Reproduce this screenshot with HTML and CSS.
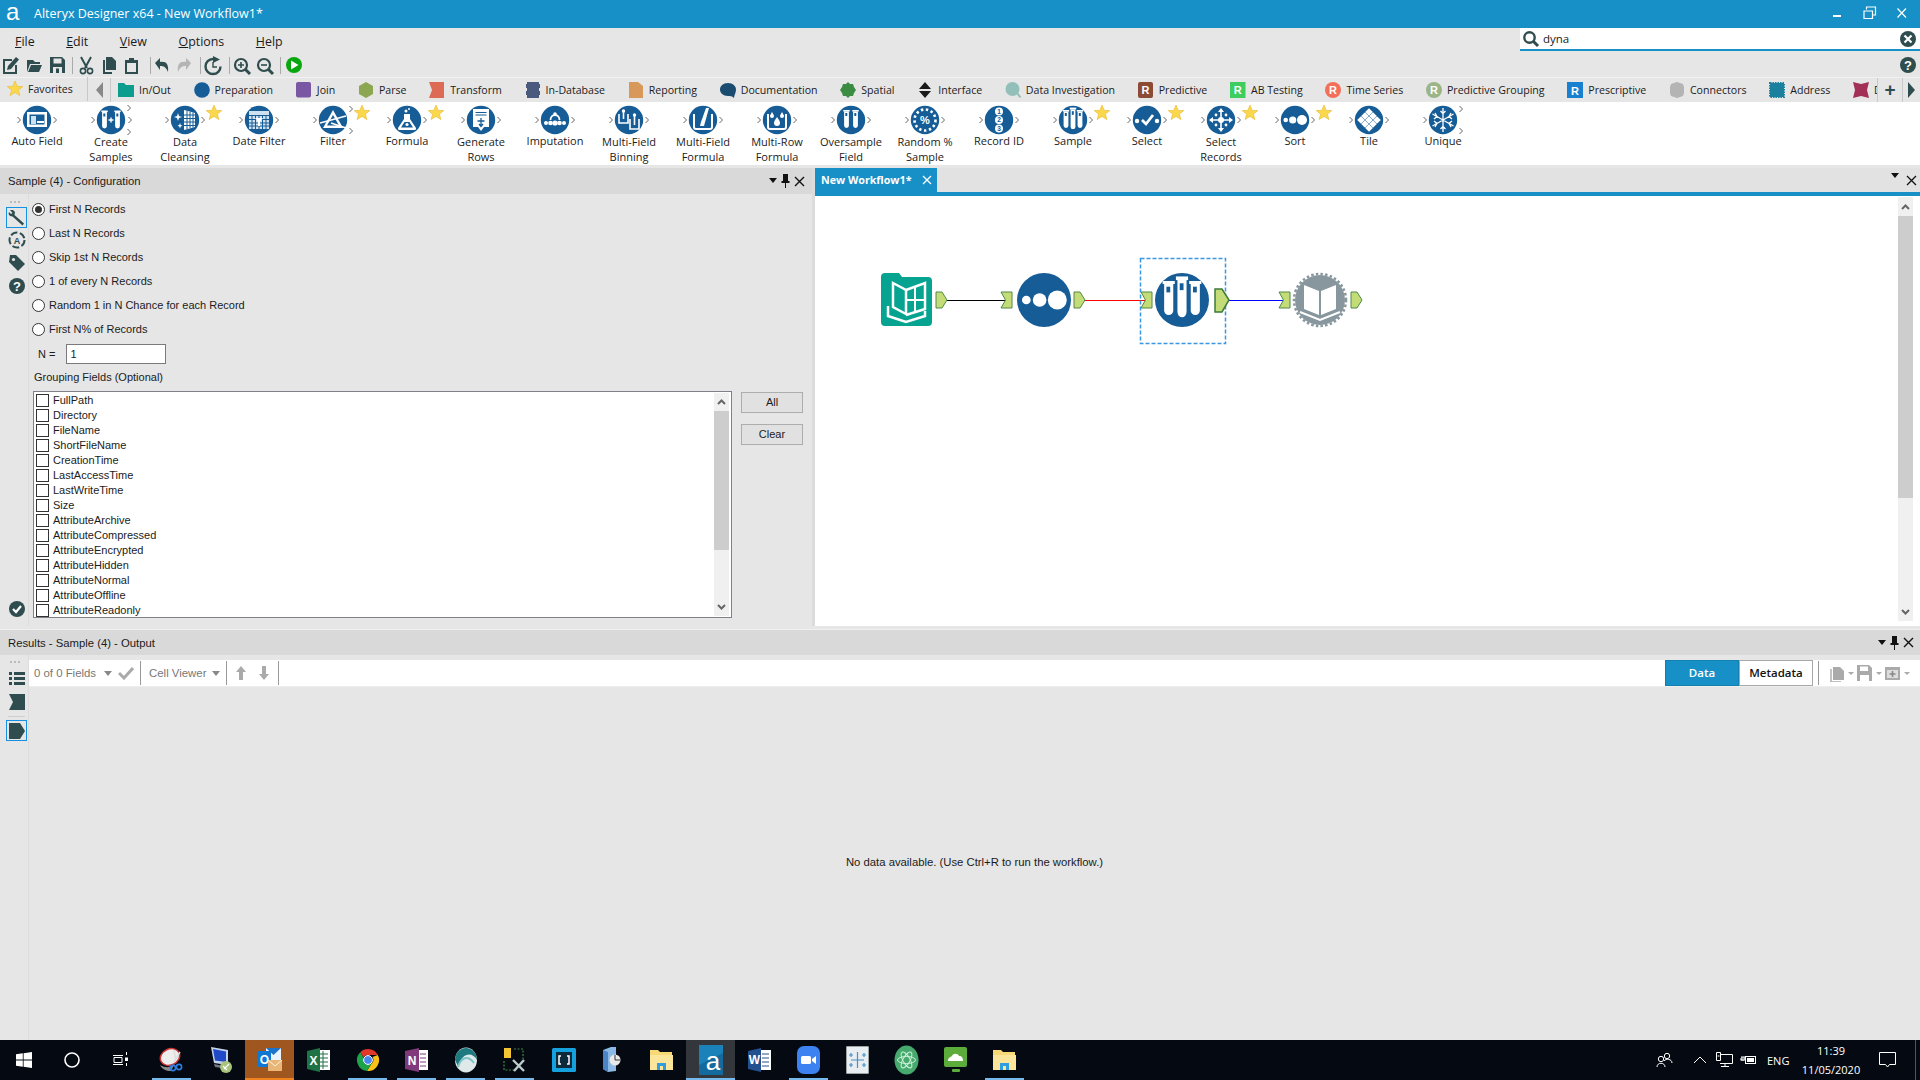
FILE: index.html
```html
<!DOCTYPE html>
<html lang="en">
<head>
<meta charset="utf-8">
<title>Alteryx Designer x64 - New Workflow1*</title>
<link rel="stylesheet" href="styles.css">
</head>
<body>
<svg class="defs" aria-hidden="true">
<defs>
<polygon id="star" points="0,-8 2.2,-2.6 7.8,-2.4 3.4,1.1 4.9,6.6 0,3.4 -4.9,6.6 -3.4,1.1 -7.8,-2.4 -2.2,-2.6" fill="#fbd84b" stroke="#e9bf3c" stroke-width=".7"/>
<path id="cv" d="M-1.5,-3 L1.5,0 L-1.5,3" fill="none" stroke="#666" stroke-width="1"/>
<g id="c11"><use href="#cv" x="19" y="18"/><use href="#cv" x="55" y="18"/></g>
<g id="c13"><use href="#cv" x="19" y="18"/><use href="#cv" x="55" y="6"/><use href="#cv" x="56" y="18"/><use href="#cv" x="55" y="30"/></g>
<g id="c12"><use href="#cv" x="19" y="18"/><use href="#cv" x="55" y="7"/><use href="#cv" x="55" y="29"/></g>
<circle id="base" r="14.2" fill="#165c96"/>

<g id="t-auto"><use href="#base"/><rect x="-10" y="-8" width="20" height="15" fill="#fff"/><rect x="-7.5" y="-5.5" width="15" height="10" fill="#165c96"/><rect x="-6" y="-4" width="5" height="8" fill="#cfe0ee"/><rect x="0" y="1" width="7" height="2" fill="#fff"/></g>
<g id="tube"><path d="M-2.4,-8 H2.4 V6 A2.4,2.4 0 0 1 -2.4,6 Z" fill="#fff"/><rect x="-3.2" y="-9.5" width="6.4" height="1.6" fill="#fff"/><rect x="-1.2" y="-6.5" width="2" height="3" fill="#165c96"/></g>
<g id="t-create"><use href="#base"/><use href="#tube" x="-6.5"/><use href="#tube" x="6.5"/><path d="M-2.5,0 H2.5 M0,-2.5 V2.5" stroke="#fff" stroke-width="1.4"/></g>
<g id="t-clean"><use href="#base"/><path d="M-1,-10 L10,-7 V7 L-1,10 Z" fill="#fff"/><path d="M2,-9 V9 M5,-8 V8 M8,-7.5 V7.5 M-1,-5 H10 M-1,-1.5 H10 M-1,2 H10 M-1,5.5 H10" stroke="#165c96" stroke-width="1"/><path d="M-7,-7 L-6,-4 L-3,-3 L-6,-2 L-7,1 L-8,-2 L-11,-3 L-8,-4 Z M-5,3 L-4.3,5 L-2.5,5.8 L-4.3,6.5 L-5,8.5 L-5.7,6.5 L-7.5,5.8 L-5.7,5 Z" fill="#fff"/></g>
<g id="t-date"><use href="#base"/><rect x="-10" y="-9" width="20" height="4" fill="#cfe0ee"/><rect x="-10" y="-4" width="20" height="13" fill="#cfe0ee"/><path d="M-7,-4 V9 M-3.5,-4 V9 M0,-4 V9 M3.5,-4 V9 M7,-4 V9 M-10,-.5 H10 M-10,3 H10 M-10,6 H10" stroke="#165c96"/><path d="M-4,-2 H4 L1,2 V6 H-1 V2 Z" fill="#fff"/></g>
<g id="t-filter"><use href="#base"/><path d="M0,-10 L-10,8 H10 Z M0,-5 L-6,5.5 H6 Z" fill="#fff" fill-rule="evenodd"/><path d="M-13,3 L13,-4 M-2,3 L13,8" stroke="#fff" stroke-width="1.5"/></g>
<g id="t-formula"><use href="#base"/><path d="M-3,-6 V-1 L-9,8 A1.5,1.5 0 0 0 -8,10 H8 A1.5,1.5 0 0 0 9,8 L3,-1 V-6 Z" fill="#fff"/><path d="M-6,7.5 L-2.5,2 H2.5 L6,7.5 Z" fill="#165c96"/><circle cx="0" cy="4.5" r="1.6" fill="#fff"/><circle cx="-1" cy="-9" r="1.5" fill="#fff"/><circle cx="2" cy="-11" r="1" fill="#fff"/></g>
<g id="t-gen"><use href="#base"/><path d="M-8,-11 H8 V7 H3 L0,11 L-3,7 H-8 Z" fill="#fff"/><path d="M-5.5,-7.5 H5.5 M-5.5,-5 H5.5" stroke="#165c96"/><path d="M0,-2 V6 M-3.5,1 H3.5 M-2,4 L0,6.5 L2,4" stroke="#165c96" stroke-width="1.3" fill="none"/></g>
<g id="t-imp"><use href="#base"/><circle cx="-9" cy="3" r="2" fill="#fff"/><circle cx="-4.5" cy="3" r="2.3" fill="#fff"/><circle cx="0" cy="3" r="2.6" fill="#fff"/><circle cx="4.5" cy="3" r="2.3" fill="#fff"/><circle cx="9" cy="3" r="2" fill="#fff"/><path d="M-4.5,0 A4.5,5 0 0 1 4.5,0" fill="none" stroke="#fff" stroke-width="1.8"/><circle cx="0" cy="-6" r="1.8" fill="#fff"/></g>
<g id="t-bin"><use href="#base"/><path d="M-10,-6 V3 H-1 V-6 M1,-1 V9 H10 V-1" fill="none" stroke="#fff" stroke-width="1.6"/><path d="M-5.5,-9 V-1 M5.5,-4 V5" stroke="#fff" stroke-width="1.6"/><circle cx="-5.5" cy="-9" r="1.7" fill="#fff"/><circle cx="5.5" cy="-5" r="1.7" fill="#fff"/></g>
<g id="t-mff"><use href="#base"/><path d="M-9,-6 V7 A2,2 0 0 0 -7,9 H7 A2,2 0 0 0 9,7 V-6" fill="none" stroke="#fff" stroke-width="2"/><path d="M6,-12 L1,6 L-3,6 L-2,2 L3,-12" fill="#fff"/></g>
<g id="t-mrf"><use href="#base"/><path d="M-9,-6 V7 A2,2 0 0 0 -7,9 H7 A2,2 0 0 0 9,7 V-6" fill="none" stroke="#fff" stroke-width="2"/><path d="M0,-3 C2,0 3,1 3,3 A3,3 0 0 1 -3,3 C-3,1 -2,0 0,-3 Z M-5,-8 C-4,-6 -3,-5 -3,-4 A2,2 0 0 1 -7,-4 C-7,-5 -6,-6 -5,-8 Z M5,-8 C6,-6 7,-5 7,-4 A2,2 0 0 1 3,-4 C3,-5 4,-6 5,-8 Z" fill="#fff"/></g>
<g id="t-over"><use href="#base"/><use href="#tube" x="-4.5" y="-.5"/><use href="#tube" x="4.5" y="-.5"/></g>
<g id="t-rand"><use href="#base"/><circle r="10.5" fill="none" stroke="#fff" stroke-width="2.6" stroke-dasharray="2.4 2.6"/><text y="4" class="svgt-b" fill="#fff" text-anchor="middle">%</text></g>
<g id="t-rec"><use href="#base"/><circle cy="-8.5" r="4" fill="#fff"/><circle cy="0" r="4" fill="#fff"/><circle cy="8.5" r="4" fill="#fff"/><text y="-6.2" class="svgt-s" fill="#165c96" text-anchor="middle">1</text><text y="2.3" class="svgt-s" fill="#165c96" text-anchor="middle">2</text><text y="10.8" class="svgt-s" fill="#165c96" text-anchor="middle">3</text></g>
<g id="t-sample"><use href="#base"/><use href="#tube" x="-7" y="-.5" /><g transform="translate(0,-1) scale(1,1.2)"><use href="#tube"/></g><use href="#tube" x="7" y="-.5"/></g>
<g id="t-select"><use href="#base"/><circle cx="-10" cy="1" r="2.2" fill="#fff"/><circle cx="10" cy="1" r="2.2" fill="#fff"/><path d="M-5,0 L-1,4 L6,-5" fill="none" stroke="#fff" stroke-width="2.8"/></g>
<g id="t-selrec"><use href="#base"/><path d="M0,-11 V11 M-11,0 H11" stroke="#fff" stroke-width="1.6"/><path d="M0,-12 L-3,-8 H3 Z M0,12 L-3,8 H3 Z M-12,0 L-8,-3 V3 Z M12,0 L8,-3 V3 Z" fill="#fff"/><circle r="3" fill="#fff"/><circle cx="-5" cy="-5" r="1.4" fill="#fff"/><circle cx="5" cy="-5" r="1.4" fill="#fff"/><circle cx="-5" cy="5" r="1.4" fill="#fff"/><circle cx="5" cy="5" r="1.4" fill="#fff"/></g>
<g id="t-sort"><use href="#base"/><circle cx="-9.3" r="2.3" fill="#fff"/><circle cx="-2.3" r="3.6" fill="#fff"/><circle cx="7" r="5" fill="#fff"/></g>
<g id="d"><rect x="-2.7" y="-2.7" width="5.4" height="5.4" transform="rotate(45)" fill="#fff"/></g>
<g id="t-tile"><use href="#base"/><use href="#d" y="-8"/><use href="#d" x="-4" y="-4"/><use href="#d" x="4" y="-4"/><use href="#d" x="-8"/><use href="#d"/><use href="#d" x="8"/><use href="#d" x="-4" y="4"/><use href="#d" x="4" y="4"/><use href="#d" y="8"/></g>
<g id="t-uni"><use href="#base"/><path d="M0,-12 V12 M-10.5,-6 L10.5,6 M-10.5,6 L10.5,-6 M-2.5,-9 L0,-6.5 L2.5,-9 M-2.5,9 L0,6.5 L2.5,9 M-9,-1 L-6,-3.5 L-8,-7 M9,1 L6,3.5 L8,7 M-9,1 L-6,3.5 L-8,7 M9,-1 L6,-3.5 L8,-7" stroke="#fff" stroke-width="1.3" fill="none"/></g>

<g id="anc-out"><path d="M-5,-8 H1 L6,0 L1,8 H-5 Z" fill="#c4dc78" stroke="#4e8a45"/></g>
<g id="anc-in"><path d="M-5.5,-8 H5.5 V8 H-5.5 L-1,0 Z" fill="#c4dc78" stroke="#4e8a45"/></g>
</defs>
</svg>

<header class="titlebar">
  <div class="title-left">
    <span class="app-logo">a</span>
    <span class="app-title">Alteryx Designer x64 - New Workflow1*</span>
  </div>
  <div class="winctl">
    <svg width="12" height="12" viewBox="0 0 12 12"><rect x="1" y="8" width="8" height="2" fill="#fff"/></svg>
    <svg width="14" height="14" viewBox="0 0 14 14"><path d="M3.5,3.5 V1 H12.5 V9 H10 M1,5 H9.5 V12.5 H1 Z" fill="none" stroke="#fff" stroke-width="1.2"/></svg>
    <svg width="12" height="12" viewBox="0 0 12 12"><path d="M1.5,1.5 L10,10.5 M10,1.5 L1.5,10.5" stroke="#fff" stroke-width="1.2"/></svg>
  </div>
</header>

<div class="menurow">
  <nav class="menu">
    <span><u>F</u>ile</span><span><u>E</u>dit</span><span><u>V</u>iew</span><span><u>O</u>ptions</span><span><u>H</u>elp</span>
  </nav>
  <div class="search">
    <svg width="18" height="18" viewBox="0 0 18 18"><circle cx="7.5" cy="7.5" r="5.2" fill="none" stroke="#2f4d4e" stroke-width="2.4"/><path d="M11.5,11.5 L16,16" stroke="#2f4d4e" stroke-width="3"/></svg>
    <span class="search-text">dyna</span>
    <svg class="search-x" width="18" height="18" viewBox="0 0 18 18"><circle cx="9" cy="9" r="8" fill="#2f4d4e"/><path d="M5.5,5.5 L12.5,12.5 M12.5,5.5 L5.5,12.5" stroke="#fff" stroke-width="2.2"/></svg>
  </div>
</div>

<div class="toolbar">
  <svg class="tb-svg" width="310" height="24" viewBox="0 0 310 24">
    <g fill="#2f4d4e">
      <path d="M3,6 H12 V8 H5 V19 H15 V12 H17 V21 H3 Z"/><path d="M8,13 L16,4 L19,6.5 L11,16 L7,17 Z"/>
      <path d="M27,7 H33 L35,9 H40 V11 H30 L27,19 Z M31,12 H42 L39,19 H28 Z"/>
      <path d="M50,4 H62 L65,7 V20 H50 Z"/><rect x="53.5" y="5.5" width="8" height="5" fill="#e6e6e6"/><rect x="53" y="14" width="9" height="6" fill="#e6e6e6"/><rect x="56" y="15.5" width="3" height="4.5"/>
      <path d="M81,4 L87,15 M91,4 L85,15" stroke="#2f4d4e" stroke-width="2" fill="none"/><circle cx="83" cy="18" r="2.6" fill="none" stroke="#2f4d4e" stroke-width="1.6"/><circle cx="90" cy="18" r="2.6" fill="none" stroke="#2f4d4e" stroke-width="1.6"/>
      <path d="M106,4 H112 L116,8 V17 H106 Z"/><path d="M103,7 V21 H112 V19 H105 V7 Z"/>
      <path d="M125,7 H129 V5 H134 V7 H138 V21 H125 Z"/><rect x="127" y="10" width="9" height="9" fill="#e6e6e6"/>
      <path d="M155,10 L160,5 V9 C166,8 169,11 168,19 C166,14 164,13 160,13 V17 Z"/>
      <path d="M191,10 L186,5 V9 C180,8 177,11 178,19 C180,14 182,13 186,13 V17 Z" fill="#b4b4b4"/>
      <path d="M213,6 A7.5,7.5 0 1 0 220.5,13.5" fill="none" stroke="#2f4d4e" stroke-width="2.4"/><path d="M213,3 L220,6.5 L213,10 Z"/><path d="M213,9 V14 H217" fill="none" stroke="#2f4d4e" stroke-width="1.4"/>
      <circle cx="241" cy="12" r="6" fill="none" stroke="#2f4d4e" stroke-width="2.2"/><path d="M245,16 L250,21" stroke="#2f4d4e" stroke-width="3"/><path d="M238,12 H244 M241,9 V15" stroke="#2f4d4e" stroke-width="1.6"/>
      <circle cx="264" cy="12" r="6" fill="none" stroke="#2f4d4e" stroke-width="2.2"/><path d="M268,16 L273,21" stroke="#2f4d4e" stroke-width="3"/><path d="M261,12 H267" stroke="#2f4d4e" stroke-width="1.6"/>
    </g>
    <path d="M72.5,4 V21 M150.5,4 V21 M200.5,4 V21 M229.5,4 V21 M280.5,4 V21" stroke="#aaa"/>
    <circle cx="294" cy="12" r="8" fill="#09a70f"/><path d="M291,7.5 L298.5,12 L291,16.5 Z" fill="#fff"/>
  </svg>
  <svg class="tb-help" width="18" height="18" viewBox="0 0 18 18"><circle cx="9" cy="9" r="8" fill="#2f4d4e"/><text x="9" y="13.5" class="svgt-q" fill="#fff" text-anchor="middle">?</text></svg>
</div>

<div class="cats">
  <div class="fav">
    <svg width="16" height="16" viewBox="-8 -8 16 16"><use href="#star"/></svg>
    <span>Favorites</span>
  </div>
  <div class="cat-prev"><svg width="9" height="16" viewBox="0 0 9 16"><path d="M8,0 V16 L1,8 Z" fill="#888"/></svg></div>
  <div class="cat-list">
    <div class="cat"><svg viewBox="0 0 16 16"><path d="M0,1 H6 L8,3 H16 V15 H0 Z" fill="#0d9d8e"/></svg>In/Out</div>
    <div class="cat"><svg viewBox="0 0 16 16"><circle cx="8" cy="8" r="7.8" fill="#165c96"/></svg>Preparation</div>
    <div class="cat"><svg viewBox="0 0 16 16"><rect x="0" y="0" width="15" height="15.5" rx="2" fill="#7a57a3"/></svg>Join</div>
    <div class="cat"><svg viewBox="0 0 16 16"><path d="M8,0 L15,4 V12 L8,16 L1,12 V4 Z" fill="#8ca752"/></svg>Parse</div>
    <div class="cat"><svg viewBox="0 0 16 16"><path d="M0,0 H15 V16 H0 L3,8 Z" fill="#dd6a54"/></svg>Transform</div>
    <div class="cat"><svg viewBox="0 0 16 16"><path d="M2,0 H14 V2 H15 V6 H14 V9 H15 V13 H14 V16 H2 V13 H1 V9 H2 V6 H1 V2 H2 Z" fill="#4a5a7e"/></svg>In-Database</div>
    <div class="cat"><svg viewBox="0 0 16 16"><path d="M1,0 H10 L15,4 V16 H1 Z" fill="#d8985a"/></svg>Reporting</div>
    <div class="cat"><svg viewBox="0 0 16 16"><path d="M8,1 C13,1 16,4 16,7.5 C16,11 14,13 14,16 C12,14 10,14 8,14 C3,14 0,11 0,7.5 C0,4 3,1 8,1 Z" fill="#1a4c70"/></svg>Documentation</div>
    <div class="cat"><svg viewBox="0 0 16 16"><path d="M8,0 L10,2 L13,2 L14,5 L16,8 L14,11 L13,14 L10,14 L8,16 L6,14 L3,14 L2,11 L0,8 L2,5 L3,2 L6,2 Z" fill="#3a8d43"/></svg>Spatial</div>
    <div class="cat"><svg viewBox="0 0 16 16"><path d="M8,0 L14,7 H2 Z M2,9 H14 L8,16 Z" fill="#1a1a1a"/></svg>Interface</div>
    <div class="cat"><svg viewBox="0 0 16 16"><circle cx="7.5" cy="7" r="7" fill="#92bfb9"/><path d="M12,11 L15.5,15.5" stroke="#92bfb9" stroke-width="2"/></svg>Data Investigation</div>
    <div class="cat"><svg viewBox="0 0 16 16"><rect width="15" height="16" rx="2" fill="#8b4b35"/><text x="7.5" y="12" class="svgt-r" fill="#fff" text-anchor="middle">R</text></svg>Predictive</div>
    <div class="cat"><svg viewBox="0 0 16 16"><rect width="15.5" height="16" fill="#3ece5f"/><text x="7.7" y="12" class="svgt-r" fill="#fff" text-anchor="middle">R</text></svg>AB Testing</div>
    <div class="cat"><svg viewBox="0 0 16 16"><circle cx="8" cy="8" r="8" fill="#f2705a"/><text x="8" y="12" class="svgt-r" fill="#fff" text-anchor="middle">R</text></svg>Time Series</div>
    <div class="cat"><svg viewBox="0 0 16 16"><circle cx="8" cy="8" r="8" fill="#9cb587"/><text x="8" y="12" class="svgt-r" fill="#fff" text-anchor="middle">R</text></svg>Predictive Grouping</div>
    <div class="cat"><svg viewBox="0 0 16 16"><rect width="16" height="16" fill="#1780d1"/><text x="8" y="12.5" class="svgt-r" fill="#fff" text-anchor="middle">R</text></svg>Prescriptive</div>
    <div class="cat"><svg viewBox="0 0 16 16"><path d="M8,0 L11,1 L14,2 L15,5 L15,11 L14,14 L11,15 L8,16 L5,15 L2,14 L1,11 L1,5 L2,2 L5,1 Z" fill="#b4b4b4"/></svg>Connectors</div>
    <div class="cat"><svg viewBox="0 0 16 16"><rect x="1" y="1" width="14" height="14" fill="#1b7f9e" stroke="#1b7f9e" stroke-width="2" stroke-dasharray="1.5 1"/></svg>Address</div>
    <div class="cat"><svg viewBox="0 0 16 16"><path d="M0,0 L8,2 L16,0 L14,8 L16,16 L8,14 L0,16 L2,8 Z" fill="#a22f55"/></svg>D</div>
  </div>
  <div class="cat-add">+</div>
  <div class="cat-next"><svg width="9" height="16" viewBox="0 0 9 16"><path d="M1,0 V16 L8,8 Z" fill="#2f4d4e"/></svg></div>
</div>

<div class="tools">
  <div class="tool"><svg viewBox="0 0 74 34"><use href="#c11"/><use href="#t-auto" x="37" y="18"/></svg><span>Auto Field</span></div>
  <div class="tool two"><svg viewBox="0 0 74 34"><use href="#c13"/><use href="#t-create" x="37" y="18"/></svg><span>Create<br>Samples</span></div>
  <div class="tool two"><svg viewBox="0 0 74 34"><use href="#c11"/><use href="#t-clean" x="37" y="18"/><use href="#star" x="66" y="11"/></svg><span>Data<br>Cleansing</span></div>
  <div class="tool"><svg viewBox="0 0 74 34"><use href="#c11"/><use href="#t-date" x="37" y="18"/></svg><span>Date Filter</span></div>
  <div class="tool"><svg viewBox="0 0 74 34"><use href="#c12"/><use href="#t-filter" x="37" y="18"/><use href="#star" x="66" y="11"/></svg><span>Filter</span></div>
  <div class="tool"><svg viewBox="0 0 74 34"><use href="#c11"/><use href="#t-formula" x="37" y="18"/><use href="#star" x="66" y="11"/></svg><span>Formula</span></div>
  <div class="tool two"><svg viewBox="0 0 74 34"><use href="#c11"/><use href="#t-gen" x="37" y="18"/></svg><span>Generate<br>Rows</span></div>
  <div class="tool"><svg viewBox="0 0 74 34"><use href="#c11"/><use href="#t-imp" x="37" y="18"/></svg><span>Imputation</span></div>
  <div class="tool two"><svg viewBox="0 0 74 34"><use href="#c11"/><use href="#t-bin" x="37" y="18"/></svg><span>Multi-Field<br>Binning</span></div>
  <div class="tool two"><svg viewBox="0 0 74 34"><use href="#c11"/><use href="#t-mff" x="37" y="18"/></svg><span>Multi-Field<br>Formula</span></div>
  <div class="tool two"><svg viewBox="0 0 74 34"><use href="#c11"/><use href="#t-mrf" x="37" y="18"/></svg><span>Multi-Row<br>Formula</span></div>
  <div class="tool two"><svg viewBox="0 0 74 34"><use href="#c11"/><use href="#t-over" x="37" y="18"/></svg><span>Oversample<br>Field</span></div>
  <div class="tool two"><svg viewBox="0 0 74 34"><use href="#c11"/><use href="#t-rand" x="37" y="18"/></svg><span>Random %<br>Sample</span></div>
  <div class="tool"><svg viewBox="0 0 74 34"><use href="#c11"/><use href="#t-rec" x="37" y="18"/></svg><span>Record ID</span></div>
  <div class="tool"><svg viewBox="0 0 74 34"><use href="#c11"/><use href="#t-sample" x="37" y="18"/><use href="#star" x="66" y="11"/></svg><span>Sample</span></div>
  <div class="tool"><svg viewBox="0 0 74 34"><use href="#c11"/><use href="#t-select" x="37" y="18"/><use href="#star" x="66" y="11"/></svg><span>Select</span></div>
  <div class="tool two"><svg viewBox="0 0 74 34"><use href="#c11"/><use href="#t-selrec" x="37" y="18"/><use href="#star" x="66" y="11"/></svg><span>Select<br>Records</span></div>
  <div class="tool"><svg viewBox="0 0 74 34"><use href="#c11"/><use href="#t-sort" x="37" y="18"/><use href="#star" x="66" y="11"/></svg><span>Sort</span></div>
  <div class="tool"><svg viewBox="0 0 74 34"><use href="#c11"/><use href="#t-tile" x="37" y="18"/></svg><span>Tile</span></div>
  <div class="tool"><svg viewBox="0 0 74 34"><use href="#c12"/><use href="#t-uni" x="37" y="18"/></svg><span>Unique</span></div>
</div>

<main class="workspace">
  <section class="config">
    <div class="panelhead">
      <span>Sample (4) - Configuration</span>
      <div class="panelctl">
        <svg width="8" height="6" viewBox="0 0 8 6"><path d="M0,0 H8 L4,5 Z" fill="#111"/></svg>
        <svg width="9" height="14" viewBox="0 0 9 14"><path d="M2,0 H7 V7 H8.5 V9 H5 V14 H4 V9 H.5 V7 H2 Z" fill="#111"/></svg>
        <svg width="11" height="11" viewBox="0 0 11 11"><path d="M1,1 L10,10 M10,1 L1,10" stroke="#111" stroke-width="1.4"/></svg>
      </div>
    </div>
    <div class="configbody">
      <aside class="rail">
        <div class="rail-dots"></div>
        <div class="rail-btn on"><svg width="18" height="18" viewBox="0 0 18 18"><path d="M2,1 L5,1 L7,3 L6.5,6 L16,14.5 L14.5,16.5 L4.5,7.5 L2,7 L0.5,5 L1,3 L3,5 L4.5,4 Z" fill="#2f4d4e"/></svg></div>
        <div class="rail-btn"><svg width="18" height="18" viewBox="0 0 18 18"><circle cx="9" cy="9" r="7.5" fill="none" stroke="#2f4d4e" stroke-width="2" stroke-dasharray="7 2.5"/><text x="9" y="12.5" class="svgt-s2" fill="#2f4d4e" text-anchor="middle">A</text></svg></div>
        <div class="rail-btn"><svg width="18" height="18" viewBox="0 0 18 18"><path d="M2,1 H8 L17,10 L10,17 L1,8 Z" fill="#2f4d4e"/><circle cx="5.5" cy="5.5" r="1.6" fill="#e6e6e6"/></svg></div>
        <div class="rail-btn"><svg width="18" height="18" viewBox="0 0 18 18"><circle cx="9" cy="9" r="8" fill="#2f4d4e"/><text x="9" y="13.5" class="svgt-q" fill="#fff" text-anchor="middle">?</text></svg></div>
        <div class="rail-spacer"></div>
        <div class="rail-check"><svg width="18" height="18" viewBox="0 0 18 18"><circle cx="9" cy="9" r="8" fill="#2f4d4e"/><path d="M5,9 L8,12 L13,6" fill="none" stroke="#fff" stroke-width="2.2"/></svg></div>
      </aside>
      <div class="form">
        <label class="radio"><i class="dot sel"></i>First N Records</label>
        <label class="radio"><i class="dot"></i>Last N Records</label>
        <label class="radio"><i class="dot"></i>Skip 1st N Records</label>
        <label class="radio"><i class="dot"></i>1 of every N Records</label>
        <label class="radio"><i class="dot"></i>Random 1 in N Chance for each Record</label>
        <label class="radio"><i class="dot"></i>First N% of Records</label>
        <div class="nrow"><span>N =</span><div class="ninput">1</div></div>
        <div class="grp">Grouping Fields (Optional)</div>
        <div class="listrow">
          <div class="listbox">
            <div class="rows">
              <div class="row"><i></i>FullPath</div>
              <div class="row"><i></i>Directory</div>
              <div class="row"><i></i>FileName</div>
              <div class="row"><i></i>ShortFileName</div>
              <div class="row"><i></i>CreationTime</div>
              <div class="row"><i></i>LastAccessTime</div>
              <div class="row"><i></i>LastWriteTime</div>
              <div class="row"><i></i>Size</div>
              <div class="row"><i></i>AttributeArchive</div>
              <div class="row"><i></i>AttributeCompressed</div>
              <div class="row"><i></i>AttributeEncrypted</div>
              <div class="row"><i></i>AttributeHidden</div>
              <div class="row"><i></i>AttributeNormal</div>
              <div class="row"><i></i>AttributeOffline</div>
              <div class="row"><i></i>AttributeReadonly</div>
            </div>
            <div class="lscroll">
              <div class="arrow"><svg width="9" height="6" viewBox="0 0 9 6"><path d="M1,5 L4.5,1.5 L8,5" fill="none" stroke="#666" stroke-width="2"/></svg></div>
              <div class="thumb"></div>
              <div class="arrow down"><svg width="9" height="6" viewBox="0 0 9 6"><path d="M1,1 L4.5,4.5 L8,1" fill="none" stroke="#666" stroke-width="2"/></svg></div>
            </div>
          </div>
          <div class="listbtns"><div class="btn">All</div><div class="btn">Clear</div></div>
        </div>
      </div>
    </div>
  </section>
  <section class="canvaspane">
    <div class="tabstrip">
      <div class="tab"><span>New Workflow1*</span><svg width="10" height="10" viewBox="0 0 10 10"><path d="M1,1 L9,9 M9,1 L1,9" stroke="#fff" stroke-width="1.3"/></svg></div>
      <div class="tabctl">
        <svg width="8" height="6" viewBox="0 0 8 6"><path d="M0,0 H8 L4,5 Z" fill="#111"/></svg>
        <svg width="11" height="11" viewBox="0 0 11 11"><path d="M1,1 L10,10 M10,1 L1,10" stroke="#111" stroke-width="1.3"/></svg>
      </div>
    </div>
    <div class="canvas">
      <svg class="flow" width="620" height="430" viewBox="815 196 620 430">
        <path d="M947,300.5 H1007" stroke="#000" stroke-width="1"/>
        <path d="M1084,300.5 H1145" stroke="#f00" stroke-width="1"/>
        <path d="M1229,300.5 H1283" stroke="#00f" stroke-width="1"/>
        <g>
          <path d="M881,277 A4,4 0 0 1 885,273 H899 L902,277 H928 A4,4 0 0 1 932,281 V322 A4,4 0 0 1 928,326 H885 A4,4 0 0 1 881,322 Z" fill="#06a391"/>
          <path d="M893,283 L906,290 V314 L893,307 Z" fill="none" stroke="#fff" stroke-width="2.5"/>
          <path d="M906,290 L925,283 V309 L906,315" fill="none" stroke="#fff" stroke-width="2.5"/>
          <path d="M888,306 V316 L906,322 L925,316 V311" fill="none" stroke="#fff" stroke-width="2.5"/>
          <path d="M915,287 V311 M907,300 H924" stroke="#fff" stroke-width="2"/>
        </g>
        <use href="#anc-out" x="941" y="300"/>
        <use href="#anc-in" x="1006.5" y="300"/>
        <g transform="translate(1044,300) scale(1.9)"><use href="#t-sort"/></g>
        <use href="#anc-out" x="1079" y="300"/>
        <use href="#anc-in" x="1146.5" y="300"/>
        <rect x="1140.5" y="258.5" width="85" height="85" fill="none" stroke="#3b97e0" stroke-width="1.5" stroke-dasharray="4 2"/>
        <g transform="translate(1182,300) scale(1.9)"><use href="#t-sample"/></g>
        <path d="M1215,289 H1222 L1229,300 L1222,312 H1215 Z" fill="#c4dc78" stroke="#3c7a3a" stroke-width="1.5"/>
        <use href="#anc-in" x="1284.5" y="300"/>
        <g>
          <circle cx="1320" cy="300" r="25" fill="#88979d"/>
          <circle cx="1320" cy="300" r="26" fill="none" stroke="#88979d" stroke-width="2.5" stroke-dasharray="2.5 2.2"/>
          <path d="M1304,285 L1319,291 V315 L1304,309 Z M1336,285 L1321,291 V315 L1336,309 Z" fill="#fff"/>
          <path d="M1300,312 L1320,320 L1340,312" fill="none" stroke="#fff" stroke-width="2"/>
        </g>
        <use href="#anc-out" x="1356" y="300"/>
      </svg>
      <div class="cscroll">
        <div class="arrow"><svg width="9" height="6" viewBox="0 0 9 6"><path d="M1,5 L4.5,1.5 L8,5" fill="none" stroke="#666" stroke-width="2"/></svg></div>
        <div class="thumb"></div>
        <div class="arrow down"><svg width="9" height="6" viewBox="0 0 9 6"><path d="M1,1 L4.5,4.5 L8,1" fill="none" stroke="#666" stroke-width="2"/></svg></div>
      </div>
    </div>
  </section>
</main>

<section class="results">
  <div class="panelhead rhead">
    <span>Results - Sample (4) - Output</span>
    <div class="panelctl">
      <svg width="8" height="6" viewBox="0 0 8 6"><path d="M0,0 H8 L4,5 Z" fill="#111"/></svg>
      <svg width="9" height="14" viewBox="0 0 9 14"><path d="M2,0 H7 V7 H8.5 V9 H5 V14 H4 V9 H.5 V7 H2 Z" fill="#111"/></svg>
      <svg width="11" height="11" viewBox="0 0 11 11"><path d="M1,1 L10,10 M10,1 L1,10" stroke="#111" stroke-width="1.4"/></svg>
    </div>
  </div>
  <div class="resbody">
    <aside class="rail rrail">
      <div class="rail-dots"></div>
      <div class="rail-btn"><svg width="18" height="18" viewBox="0 0 18 18"><path d="M1,3 H4 V6 H1 Z M6,3 H17 V6 H6 Z M1,8 H4 V11 H1 Z M6,8 H17 V11 H6 Z M1,13 H4 V16 H1 Z M6,13 H17 V16 H6 Z" fill="#2f4d4e"/></svg></div>
      <div class="rail-btn tall"><svg width="18" height="16" viewBox="0 0 18 16"><path d="M1,0 H17 V16 H1 L5,8 Z" fill="#2f4d4e"/></svg></div>
      <div class="rail-sep"></div>
      <div class="rail-btn on"><svg width="18" height="16" viewBox="0 0 18 16"><path d="M1,0 H12 L17,8 L12,16 H1 Z" fill="#2f4d4e"/></svg></div>
    </aside>
    <div class="resmain">
      <div class="restools">
        <span class="rt-text rt-fields">0 of 0 Fields</span>
        <svg width="8" height="5" viewBox="0 0 8 5"><path d="M0,0 H8 L4,5 Z" fill="#888"/></svg>
        <svg class="rt-check" width="16" height="14" viewBox="0 0 16 14"><path d="M1,7 L6,12 L15,2" fill="none" stroke="#aaa" stroke-width="3"/></svg>
        <i class="rt-sep"></i>
        <span class="rt-text">Cell Viewer</span>
        <svg width="8" height="5" viewBox="0 0 8 5"><path d="M0,0 H8 L4,5 Z" fill="#888"/></svg>
        <i class="rt-sep"></i>
        <svg class="rt-up" width="10" height="14" viewBox="0 0 10 14"><path d="M5,0 L10,6 H7 V14 H3 V6 H0 Z" fill="#aaa"/></svg>
        <svg class="rt-down" width="10" height="14" viewBox="0 0 10 14"><path d="M5,14 L10,8 H7 V0 H3 V8 H0 Z" fill="#aaa"/></svg>
        <i class="rt-sep"></i>
        <div class="rt-spacer"></div>
        <div class="seg on">Data</div>
        <div class="seg">Metadata</div>
        <i class="rt-sep rt-sep2"></i>
        <svg width="28" height="18" viewBox="0 0 28 18"><path d="M5,3 H12 L16,7 V16 H5 Z" fill="#aaa"/><path d="M3,5 V18 H13" fill="none" stroke="#aaa" stroke-width="1.4"/><path d="M20,8 H26 L23,11 Z" fill="#aaa"/></svg>
        <svg width="28" height="18" viewBox="0 0 28 18"><path d="M1,1 H13 L16,4 V17 H1 Z" fill="#aaa"/><rect x="4" y="2.5" width="8" height="4.5" fill="#fff"/><rect x="4" y="11" width="9" height="6" fill="#fff"/><path d="M20,8 H26 L23,11 Z" fill="#aaa"/></svg>
        <svg class="rt-last" width="28" height="18" viewBox="0 0 28 18"><rect x="1" y="3" width="15" height="13" fill="#aaa"/><rect x="3" y="6" width="11" height="8" fill="#ddd"/><path d="M8.5,7 V13 M5.5,10 H11.5" stroke="#888" stroke-width="1.6"/><path d="M20,8 H26 L23,11 Z" fill="#aaa"/></svg>
      </div>
      <div class="resarea">No data available. (Use Ctrl+R to run the workflow.)</div>
    </div>
  </div>
</section>

<footer class="taskbar">
  <div class="tk tk-sys"><svg width="16" height="16" viewBox="0 0 16 16"><path d="M0,2.3 L6.8,1.3 V7.5 H0 Z M7.6,1.2 L16,0 V7.5 H7.6 Z M0,8.4 H6.8 V14.7 L0,13.7 Z M7.6,8.4 H16 V16 L7.6,14.8 Z" fill="#fff"/></svg></div>
  <div class="tk tk-sys"><svg width="16" height="16" viewBox="0 0 16 16"><circle cx="8" cy="8" r="7" fill="none" stroke="#fff" stroke-width="1.6"/></svg></div>
  <div class="tk tk-sys tk-view"><svg width="17" height="16" viewBox="0 0 17 16"><path d="M1,3.5 H11 M1,12.5 H11 M2,5.5 H10 V10.5 H2 Z" fill="none" stroke="#fff" stroke-width="1"/><rect x="13" y="5.5" width="3" height="3.5" fill="#fff"/><path d="M14.5,0 V3 M14.5,11 V14" stroke="#fff"/></svg></div>
  <div class="tk run"><svg width="26" height="26" viewBox="0 0 26 26"><ellipse cx="11" cy="10" rx="10" ry="8" fill="#eee" stroke="#c33" stroke-width="1.5" transform="rotate(-25 11 10)"/><path d="M1,18 C8,22 14,20 16,16 L12,24 C7,24 3,22 1,18 Z" fill="#8a8a8a"/><path d="M15,3 L17,14 M21,5 L15,15" stroke="#ddd" stroke-width="1.5"/><circle cx="14" cy="21" r="2.6" fill="none" stroke="#2a7de1" stroke-width="1.6"/><circle cx="20" cy="20" r="2.6" fill="none" stroke="#2a7de1" stroke-width="1.6"/></svg></div>
  <div class="tk"><svg width="26" height="28" viewBox="0 0 26 28"><path d="M3,1 L20,4 V19 L6,17 Z" fill="#c3d3ea"/><path d="M5,3 L18,5.5 V16 L7,14.5 Z" fill="#1f49c6"/><path d="M6,18 L20,21 V23 L7,21 Z" fill="#778"/><circle cx="18" cy="21" r="6" fill="#a8c37a"/><path d="M15,20 L19,24 M16,23 L21,18" stroke="#fff" stroke-width="1.2"/></svg></div>
  <div class="tk active-o"><svg width="24" height="26" viewBox="0 0 24 26"><rect x="8" y="1" width="15" height="14" fill="#eaf3fb"/><path d="M8,1 H23 L15.5,8 Z" fill="#1d73c9"/><rect x="0" y="4" width="13" height="16" fill="#0f78d4"/><text x="6.5" y="16.5" class="svgt-tb" fill="#fff" text-anchor="middle">O</text><rect x="10" y="13" width="14" height="11" fill="#e9b678"/><path d="M10,13 L17,19 L24,13" fill="none" stroke="#fff3d9" stroke-width="1"/></svg></div>
  <div class="tk"><svg width="24" height="24" viewBox="0 0 24 24"><rect x="9" y="2" width="14" height="20" fill="#fff"/><path d="M12,6 H21 M12,10 H21 M12,14 H21 M12,18 H21 M16,3 V21" stroke="#1f7246"/><path d="M0,3 L13,0 V24 L0,21 Z" fill="#1f7246"/><text x="6.5" y="16.5" class="svgt-tb" fill="#fff" text-anchor="middle">X</text></svg></div>
  <div class="tk run"><svg width="24" height="24" viewBox="0 0 24 24"><path d="M12,1 A11,11 0 0 1 21.8,7 H12 A5,5 0 0 0 7.5,9.5 L4.3,4.2 A11,11 0 0 1 12,1 Z" fill="#e3372a"/><path d="M21.8,7 A11,11 0 0 1 11,23 L15.5,15.5 A5,5 0 0 0 16.5,9 Z" fill="#fbc116"/><path d="M4.3,4.2 L9.5,13.5 A5,5 0 0 0 15.5,15.5 L11,23 A11,11 0 0 1 4.3,4.2 Z" fill="#1fa34a"/><circle cx="12" cy="12" r="4.4" fill="#4a87f0" stroke="#fff" stroke-width="1"/></svg></div>
  <div class="tk run"><svg width="24" height="24" viewBox="0 0 24 24"><rect x="9" y="2" width="14" height="20" fill="#fff"/><path d="M15,6 H21 M15,10 H21 M15,14 H21 M15,18 H21" stroke="#80397b"/><path d="M0,3 L14,0 V24 L0,21 Z" fill="#80397b"/><text x="7" y="16.5" class="svgt-tb" fill="#fff" text-anchor="middle">N</text></svg></div>
  <div class="tk run"><svg width="24" height="26" viewBox="0 0 24 26"><ellipse cx="12" cy="13" rx="11" ry="12.5" fill="#dfe9ea"/><path d="M1,13 A11,12 0 0 1 23,13 C18,4 8,6 4,19 Z" fill="#1f7a7f"/><path d="M4,20 C7,10 14,8 20,16" fill="none" stroke="#7dc4c7" stroke-width="2"/></svg></div>
  <div class="tk run"><svg width="26" height="26" viewBox="0 0 26 26"><rect x="2" y="1" width="7" height="10" fill="#f3c433"/><path d="M12,2 H21 V12 M2,14 V23 H12" fill="none" stroke="#3d8c40" stroke-width="1.2" stroke-dasharray="2 1.5"/><path d="M11,13 L22,24 M22,13 L12,24" stroke="#bcc" stroke-width="2.4"/></svg></div>
  <div class="tk"><svg width="24" height="24" viewBox="0 0 24 24"><rect width="24" height="24" rx="1.5" fill="#14a1dd"/><rect x="4" y="4" width="16" height="16" fill="#0d2a3a"/><path d="M9,8 H7 V16 H9 M15,8 H17 V16 H15" fill="none" stroke="#fff" stroke-width="1.5"/></svg></div>
  <div class="tk"><svg width="22" height="26" viewBox="0 0 22 26"><path d="M1,3 L9,0 H14 V24 L6,25 L1,22 Z" fill="#8ab9e6"/><path d="M1,3 L6,5 V25 L1,22 Z" fill="#4b84c4"/><circle cx="13" cy="13" r="5.5" fill="#e9e9e9"/><path d="M13,8 V13 H18" stroke="#333" fill="none"/></svg></div>
  <div class="tk"><svg width="23" height="22" viewBox="0 0 23 22"><path d="M0,1 H8 L10,3 H22 V21 H0 Z" fill="#f6d877"/><rect y="6" width="23" height="15" fill="#fbe59a"/><path d="M7,21 V14 H16 V21 H13 V17 H10 V21 Z" fill="#2d9fe0"/></svg></div>
  <div class="tk active-a"><svg width="24" height="30" viewBox="0 0 24 30"><rect width="24" height="30" fill="#1a82b9"/><path d="M0,20 L24,8 V30 H0 Z" fill="#146a9c"/><text x="14" y="25" class="svgt-a" fill="#fff" text-anchor="middle">a</text></svg></div>
  <div class="tk"><svg width="24" height="24" viewBox="0 0 24 24"><rect x="9" y="2" width="14" height="20" fill="#fff"/><path d="M14,6 H21 M14,10 H21 M14,14 H21 M14,18 H21" stroke="#23508f"/><path d="M0,3 L13,0 V24 L0,21 Z" fill="#23508f"/><text x="6.5" y="16" class="svgt-tb" fill="#fff" text-anchor="middle">W</text></svg></div>
  <div class="tk run"><svg width="23" height="28" viewBox="0 0 23 28"><rect width="23" height="28" rx="7" fill="#3c82f0"/><rect x="4" y="10" width="10" height="8" rx="1.5" fill="#fff"/><path d="M15,13 L19,10 V18 L15,15 Z" fill="#fff"/></svg></div>
  <div class="tk"><svg width="23" height="28" viewBox="0 0 23 28"><rect width="23" height="28" rx="1" fill="#e8edf1" stroke="#555"/><path d="M11.5,6 V22 M5,14 H18 M5,7 V11 M3,9 H7 M18,7 V11 M16,9 H20 M5,17 V21 M3,19 H7 M18,17 V21 M16,19 H20" stroke="#4a90c0" stroke-width="1.2"/></svg></div>
  <div class="tk"><svg width="25" height="30" viewBox="0 0 25 30"><ellipse cx="12.5" cy="15" rx="12" ry="14.5" fill="#46a96d"/><ellipse cx="12.5" cy="15" rx="9" ry="3.5" fill="none" stroke="#d0f0da" transform="rotate(60 12.5 15)"/><ellipse cx="12.5" cy="15" rx="9" ry="3.5" fill="none" stroke="#d0f0da" transform="rotate(-60 12.5 15)"/><ellipse cx="12.5" cy="15" rx="9" ry="3.5" fill="none" stroke="#d0f0da"/></svg></div>
  <div class="tk"><svg width="23" height="26" viewBox="0 0 23 26"><rect width="23" height="20" rx="2" fill="#5cac3c"/><path d="M4,14 C4,10 7,10 8,9 C9,6 14,6 15,9 C18,9 19,11 19,14 Z" fill="#fff"/><rect x="8" y="22" width="8" height="3" rx="1" fill="#5cac3c"/></svg></div>
  <div class="tk run"><svg width="23" height="22" viewBox="0 0 23 22"><path d="M0,1 H8 L10,3 H22 V21 H0 Z" fill="#f6d877"/><rect y="6" width="23" height="15" fill="#fbe59a"/><path d="M7,21 V14 H16 V21 H13 V17 H10 V21 Z" fill="#2d9fe0"/></svg></div>
  <div class="tray">
    <svg width="17" height="16" viewBox="0 0 17 16"><circle cx="5" cy="7" r="2.7" fill="none" stroke="#fff"/><circle cx="11" cy="4" r="2.7" fill="none" stroke="#fff"/><path d="M1,15 C1,10 9,10 9,15 M8,9 C10,6 16,7 16,11" fill="none" stroke="#fff"/></svg>
    <svg class="tr-caret" width="14" height="8" viewBox="0 0 14 8"><path d="M1,7 L7,1 L13,7" fill="none" stroke="#fff" stroke-width="1"/></svg>
    <svg class="tr-net" width="17" height="16" viewBox="0 0 17 16"><path d="M4,2.5 H16.5 V11.5 H4 M9,11.5 V14.5 M5,14.5 H13 M4.5,0.5 H.5 V8.5 H4.5 Z M1.5,4 H3.5" fill="none" stroke="#fff"/></svg>
    <svg class="tr-bat" width="17" height="12" viewBox="0 0 17 12"><rect x="5.5" y="2.5" width="10" height="7" fill="none" stroke="#fff"/><rect x="7" y="4" width="7" height="4" fill="#fff"/><path d="M.5,6 H4 M2,2 V4 M4,2 V4 M1,4 H5 V6 H1 Z" fill="none" stroke="#fff"/></svg>
    <span class="tr-lang">ENG</span>
    <div class="tr-clock"><span>11:39</span><span>11/05/2020</span></div>
    <svg class="tr-note" width="17" height="17" viewBox="0 0 17 17"><path d="M.5,.5 H16.5 V12.5 H10.5 L8.5,15 L6.5,12.5 H.5 Z" fill="none" stroke="#fff"/></svg>
    <i class="tr-show"></i>
  </div>
</footer>
</body>
</html>
```

FILE: styles.css
```css
* { box-sizing: border-box; }
html, body { margin: 0; padding: 0; }
body {
  width: 1920px; height: 1080px; overflow: hidden;
  display: flex; flex-direction: column;
  background: #e6e6e6; color: #1b1b1b;
  font-family: "Open Sans", "Liberation Sans", sans-serif; font-size: 11px;
}
.defs { position: absolute; width: 0; height: 0; }
.svgt-b { font: 700 11px "Liberation Sans", sans-serif; }
.svgt-s { font: 700 6.5px "Liberation Sans", sans-serif; }
.svgt-s2 { font: 700 9px "Liberation Sans", sans-serif; }
.svgt-q { font: 700 13px "Liberation Sans", sans-serif; }
.svgt-r { font: 700 11px "Liberation Sans", sans-serif; }
.svgt-tb { font: 700 12px "Liberation Sans", sans-serif; }
.svgt-a { font: 400 26px "Liberation Sans", sans-serif; }

.titlebar { height: 28px; flex: none; background: #1690c7; color: #fff; display: flex; align-items: center; justify-content: space-between; }
.title-left { display: flex; align-items: center; margin-top: -2px; }
.app-logo { width: 34px; padding-left: 6px; font: 400 24px/24px "Liberation Sans", sans-serif; margin-top: -3px; }
.app-title { font-size: 12.5px; }
.winctl { display: flex; align-items: center; gap: 19px; padding-right: 12px; margin-top: -2px; }

.menurow { height: 25px; flex: none; display: flex; justify-content: space-between; }
.menu { display: flex; gap: 31.6px; padding: 5px 0 0 15px; font-size: 12.4px; line-height: 17px; }
.search { width: 400px; height: 23px; background: #fff; border-bottom: 2px solid #1690c7; display: flex; align-items: center; padding: 0 0 0 2px; }
.search-text { margin-left: 3px; font-size: 11.5px; flex: 1; }
.search-x { margin-right: 3px; }

.toolbar { height: 24px; flex: none; display: flex; justify-content: space-between; align-items: center; }
.tb-help { margin-right: 3px; }
.tb-svg { display: block; }

.cats { height: 25px; flex: none; display: flex; align-items: center; border-top: 1px solid #f2f2f2; }
.fav { width: 88px; height: 24px; display: flex; align-items: center; gap: 5px; padding-left: 7px; border-right: 1px solid #c8c8c8; margin-top: -2px; font-size: 10.6px; }
.cat-prev { width: 23px; display: flex; justify-content: center; height: 24px; align-items: center; border-right: 1px solid #c8c8c8; }
.cat-list { flex: 1; display: flex; gap: 22.7px; padding: 0 0 1px 7px; overflow: hidden; height: 24px; align-items: center; min-width: 0; font-size: 10.6px; }
.cat { display: flex; flex: none; align-items: center; gap: 5px; }
.cat svg { width: 16px; height: 16px; flex: none; }
.cat-add { width: 26px; height: 24px; border-left: 1px solid #c8c8c8; border-right: 1px solid #c8c8c8; text-align: center; font: 700 19px/23px "Liberation Sans", sans-serif; color: #2f4d4e; flex: none; }
.cat-next { width: 17px; flex: none; display: flex; justify-content: center; }

.tools { height: 63px; flex: none; background: #fff; display: flex; margin-bottom: 3px; }
.tool { width: 74px; flex: none; display: flex; flex-direction: column; align-items: center; }
.tool svg { width: 74px; height: 34px; flex: none; display: block; }
.tool span { text-align: center; line-height: 15px; margin-top: -3px; white-space: nowrap; }
.tool.two span { margin-top: -2px; }

.workspace { height: 458px; flex: none; display: flex; }
.config { width: 815px; flex: none; display: flex; flex-direction: column; border-right: 3px solid #dcdcdc; }
.panelhead { height: 26px; flex: none; background: #d9d9d9; display: flex; align-items: center; justify-content: space-between; padding: 0 7px 0 8px; font: 11.3px "Liberation Sans", sans-serif; }
.panelctl { display: flex; align-items: center; gap: 4px; }
.configbody { flex: 1; display: flex; min-height: 0; }

.rail { width: 29px; flex: none; display: flex; flex-direction: column; align-items: flex-start; padding: 7px 0 0 6px; border-right: 1px solid #dcdcdc; }
.rail-dots { width: 10px; height: 2px; margin: 0 0 4px 4px; background: repeating-linear-gradient(90deg, #bbb 0 2px, transparent 2px 4px); }
.rail-btn { width: 21px; height: 21px; display: flex; align-items: center; justify-content: center; margin-bottom: 2px; border: 1px solid transparent; }
.rail-btn.on { border-color: #1690e0; margin-bottom: 1px; }
.rail-spacer { flex: 1; }
.rail-check { width: 21px; height: 18px; display: flex; justify-content: center; margin-bottom: 8px; }

.form { flex: 1; padding: 3px 0 0 3px; font: 11px "Liberation Sans", sans-serif; min-width: 0; }
.radio { height: 24px; display: flex; align-items: center; gap: 4px; }
.dot { width: 13px; height: 13px; border-radius: 50%; background: #fff; border: 1px solid #333; display: flex; align-items: center; justify-content: center; }
.dot.sel::after { content: ""; width: 7px; height: 7px; border-radius: 50%; background: #333; }
.nrow { display: flex; align-items: center; height: 21px; padding-left: 6px; gap: 11px; margin-top: 2px; }
.ninput { width: 100px; height: 20px; background: #fff; border: 1px solid #7a7a7a; padding: 2px 0 0 3px; line-height: 15px; }
.grp { margin: 5px 0 0 2px; height: 16px; line-height: 16px; }
.listrow { display: flex; margin-top: 6px; padding-left: 1px; }
.listbox { width: 699px; height: 227px; background: #fff; border: 1px solid #80808a; display: flex; justify-content: space-between; overflow: hidden; }
.rows { padding: 1px 0 0 2px; }
.row { height: 15px; display: flex; align-items: center; gap: 4px; line-height: 15px; }
.row i { width: 13px; height: 13px; border: 1px solid #333; background: #fff; }
.lscroll { width: 15px; margin: 1px 2px 1px 0; background: #f0f0f0; display: flex; flex-direction: column; }
.arrow { height: 18px; flex: none; display: flex; align-items: center; justify-content: center; }
.lscroll .thumb { height: 139px; background: #cdcdcd; flex: none; }
.lscroll .arrow.down { margin-top: auto; }
.listbtns { margin-left: 9px; display: flex; flex-direction: column; gap: 11px; padding-top: 1px; }
.btn { width: 62px; height: 21px; background: #e1e1e1; border: 1px solid #adadad; text-align: center; line-height: 19px; }

.canvaspane { flex: 1; display: flex; flex-direction: column; min-width: 0; }
.tabstrip { height: 28px; flex: none; background: #e2e2e2; border-bottom: 4px solid #1690c7; display: flex; justify-content: space-between; }
.tab { width: 122px; height: 24px; background: #1690c7; color: #fff; display: flex; align-items: center; justify-content: space-between; padding: 0 5px 0 6px; font-weight: 700; font-size: 10.7px; }
.tabctl { display: flex; gap: 7px; align-items: flex-start; padding: 5px 3px 0 0; }
.tabctl svg:last-child { margin-top: 2px; }
.canvas { flex: 1; background: #fff; display: flex; justify-content: space-between; min-height: 0; }
.flow { display: block; }
.cscroll { width: 15px; margin: 1px 7px 5px 0; background: #f0f0f0; display: flex; flex-direction: column; }
.cscroll .arrow:first-child { height: 19px; }
.cscroll .thumb { height: 282px; background: #cdcdcd; flex: none; }
.cscroll .arrow.down { margin-top: auto; }

.results { margin-top: 3px; flex: 1; display: flex; flex-direction: column; min-height: 0; border-top: 1px solid #f0f0f0; }
.rhead { height: 25px; padding-right: 6px; }
.resbody { flex: 1; display: flex; min-height: 0; }
.rrail { padding-top: 6px; }
.rail-btn.tall { margin-bottom: 0; margin-top: 1px; }
.rail-sep { width: 17px; height: 1px; background: #cfcfcf; margin: 4px 0 3px 2px; }
.resmain { flex: 1; display: flex; flex-direction: column; min-width: 0; padding-top: 5px; }
.restools { height: 27px; flex: none; background: #fff; display: flex; align-items: center; padding-left: 5px; border-bottom: 1px solid #eee; font: 11.4px "Liberation Sans", sans-serif; }
.rt-text { color: #777; margin-right: 6px; }
.rt-fields { margin-right: 8px; }
.rt-check { margin-left: 6px; }
.rt-sep { width: 1px; height: 24px; background: #999; margin: 0 8px 0 6px; flex: none; }
.rt-up { margin: 0 13px 0 1px; }
.rt-down { margin: 0 3px 0 0; }
.rt-spacer { flex: 1; }
.seg { width: 74px; height: 26px; border: 1px solid #a8a8a8; text-align: center; line-height: 24px; font-family: "Open Sans", sans-serif; font-weight: 600; font-size: 11.5px; color: #111; background: #fff; }
.seg.on { background: #1690c7; color: #fff; border-color: #1480b0; }
.rt-sep2 { margin: 0 9px 0 5px; }
.rt-last { margin-right: 8px; }
.resarea { flex: 1; display: flex; align-items: center; justify-content: center; padding-bottom: 3px; font: 11.3px "Liberation Sans", sans-serif; }

.taskbar { height: 40px; flex: none; background: #050a12; display: flex; align-items: center; color: #fff; }
.tk { width: 49px; height: 40px; flex: none; display: flex; align-items: center; justify-content: center; position: relative; }
.tk-sys { width: 48px; }
.tk-view { width: 48px; margin-right: 3px; }
.tk.run::after { content: ""; position: absolute; left: 5px; right: 5px; bottom: 0; height: 2px; background: #76b9ed; }
.active-o { background: #a0561f; }
.active-o::after { content: ""; position: absolute; left: 0; right: 0; bottom: 0; height: 2px; background: #f0831e; }
.active-a { background: #33373c; }
.active-a::after { content: ""; position: absolute; left: 0; right: 0; bottom: 0; height: 2px; background: #76b9ed; }
.tray { flex: 1; display: flex; align-items: center; justify-content: flex-end; font: 11px "Open Sans", sans-serif; height: 40px; }
.tr-caret { margin-left: 20px; }
.tr-net { margin-left: 9px; }
.tr-bat { margin-left: 7px; }
.tr-lang { margin-left: 10px; width: 27px; }
.tr-clock { width: 72px; margin-left: 1px; display: flex; flex-direction: column; align-items: center; line-height: 19px; }
.tr-note { margin-left: 12px; }
.tr-show { width: 1px; height: 40px; background: #555; margin: 0 4px 0 19px; }
```
